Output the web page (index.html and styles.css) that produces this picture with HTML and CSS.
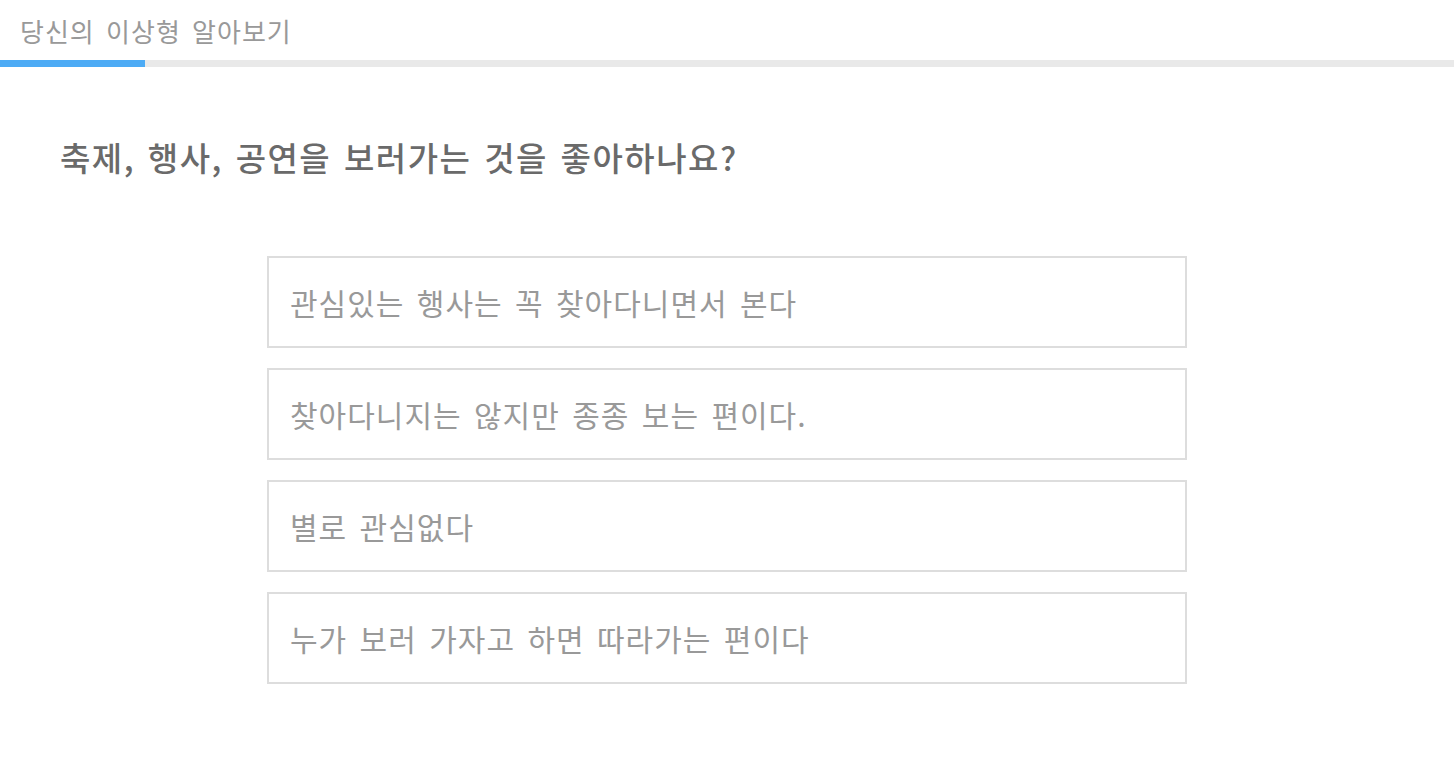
FILE: index.html
```html
<!DOCTYPE html>
<html lang="ko">
<head>
<meta charset="utf-8">
<title>당신의 이상형 알아보기</title>
<link rel="stylesheet" href="styles.css">
</head>
<body>
<header class="header">
  <h1 class="header-title">당신의 이상형 알아보기</h1>
</header>
<div class="progress"><div class="progress-bar" style="width:145px"></div></div>
<main class="main">
  <h2 class="question">축제, 행사, 공연을 보러가는 것을 좋아하나요?</h2>
  <ul class="options">
    <li class="option">관심있는 행사는 꼭 찾아다니면서 본다</li>
    <li class="option">찾아다니지는 않지만 종종 보는 편이다.</li>
    <li class="option">별로 관심없다</li>
    <li class="option">누가 보러 가자고 하면 따라가는 편이다</li>
  </ul>
</main>
</body>
</html>
```
FILE: styles.css
```css
* { box-sizing: border-box; }
html, body { margin: 0; padding: 0; background: #fff; }
body { font-family: "Noto Sans CJK KR", "Noto Sans", sans-serif; }
.header { height: 60px; display: flex; align-items: center; padding-left: 20px; }
.header-title { margin: 0; font-size: 26px; font-weight: 400; color: #999; letter-spacing: 1px; word-spacing: 3px; }
.progress { height: 7px; background: #e9e9e9; }
.progress-bar { height: 100%; background: #4dabf5; }
.main { padding: 67px 60px 0; }
.question { margin: 0; font-size: 33px; font-weight: 500; color: #6a6a6a; line-height: 46px; letter-spacing: 1.5px; word-spacing: 2px; }
.options { list-style: none; margin: 76px auto 0; padding: 0; width: 920px; display: flex; flex-direction: column; gap: 20px; }
.option { height: 92px; border: 2px solid #ddd; display: flex; align-items: center; padding-left: 21px; font-size: 30px; color: #999; letter-spacing: 1px; word-spacing: 3px; }
```
